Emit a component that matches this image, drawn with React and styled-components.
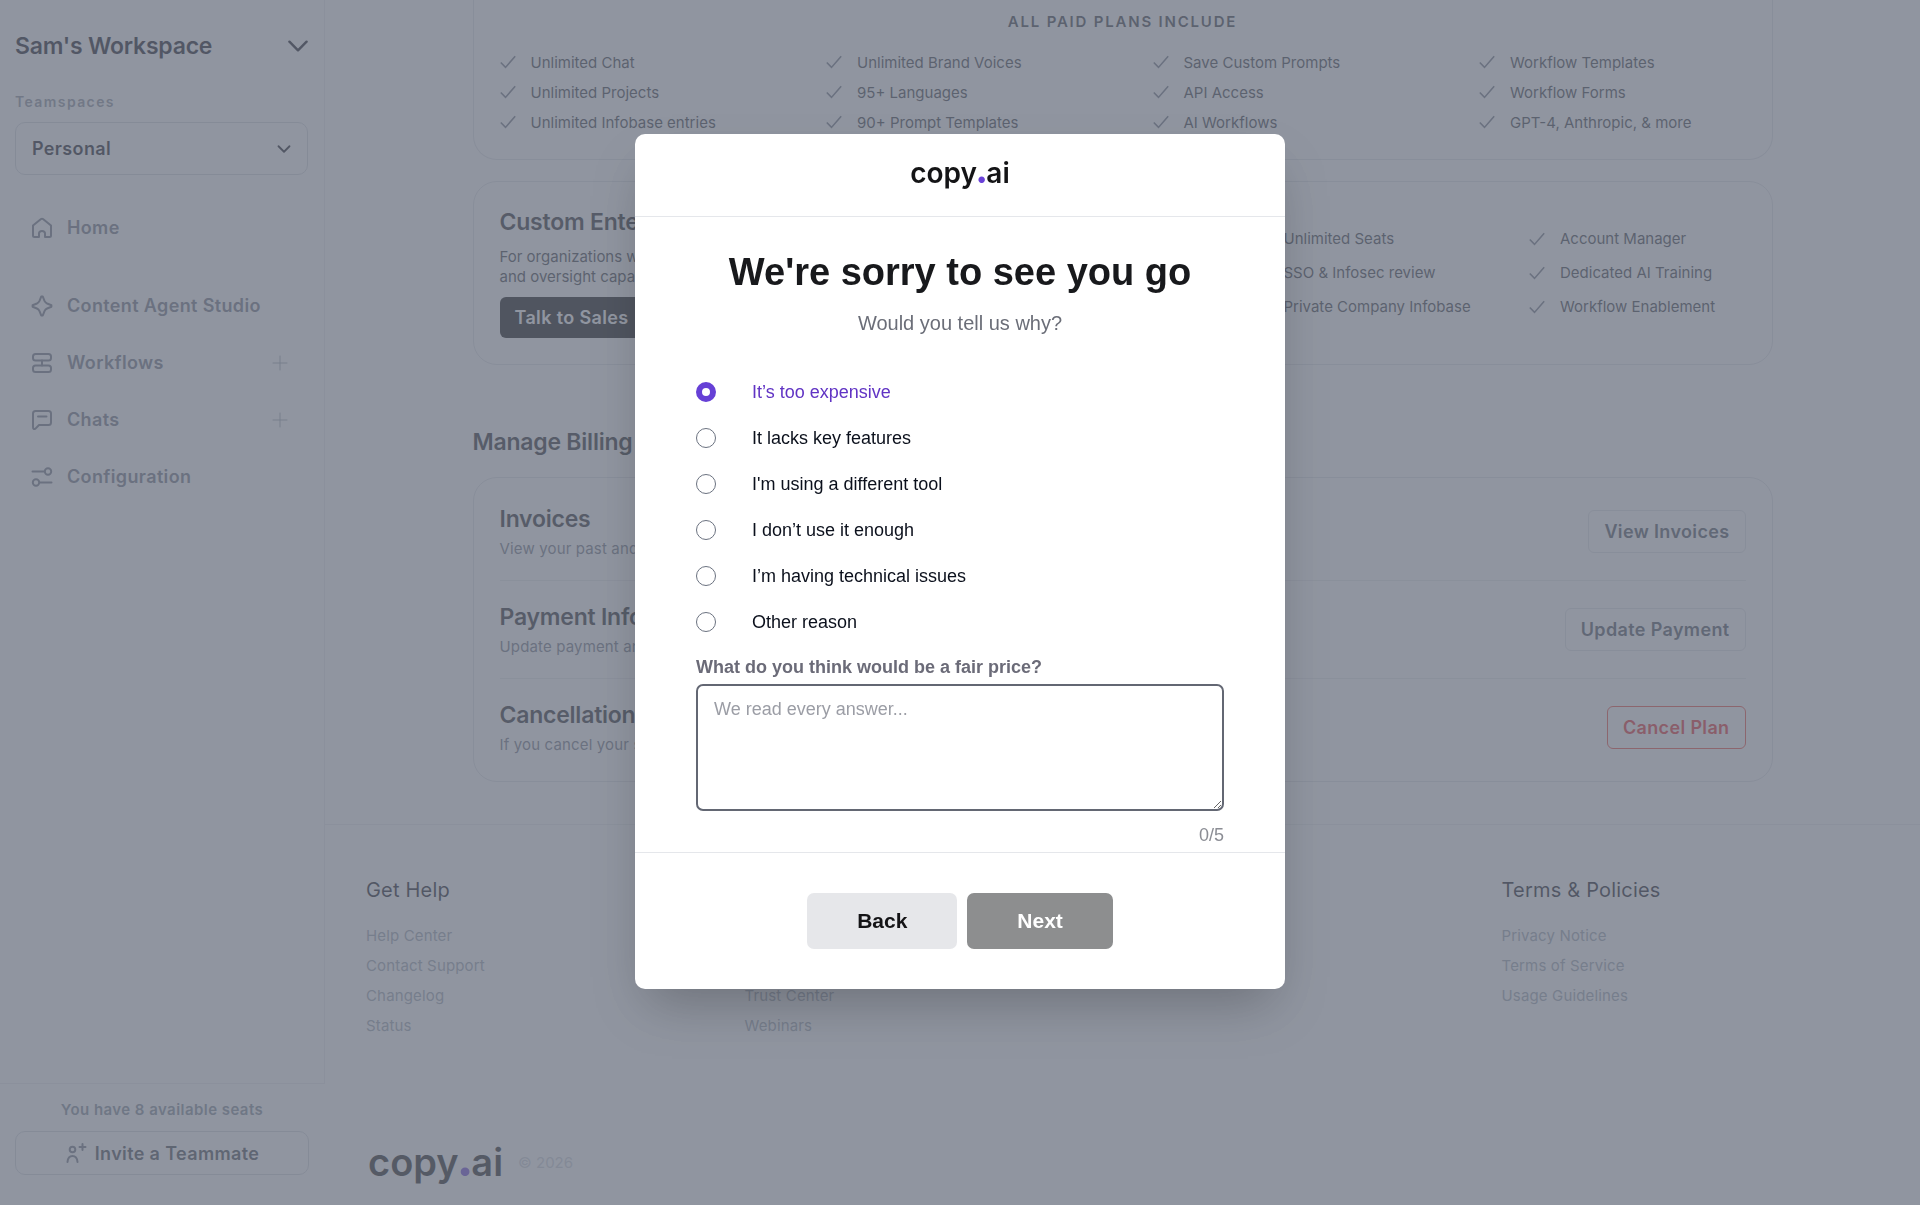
import React, { useState } from "react";
import styled, { createGlobalStyle } from "styled-components";
import { ChevronDown, Plus } from "lucide-react";

const GlobalStyle = createGlobalStyle`
  *, *::before, *::after { box-sizing: border-box; }
  body { margin: 0; background: #fff; font-family: Inter, "Liberation Sans", sans-serif; color: #0b0b14; }
  h1, h2, h3, p, ul { margin: 0; padding: 0; }
  ul { list-style: none; }
  a { color: inherit; text-decoration: none; }
  button, select, textarea { font: inherit; color: inherit; }
`;

const Shell = styled.div`
  display: flex;
  height: 100vh;
  overflow: hidden;
`;

/* Sidebar */

const Sidebar = styled.aside`
  display: flex;
  flex-direction: column;
  flex: none;
  width: 325px;
`;

const SidebarBody = styled.div`
  flex: 1;
  padding: 28px 16px 0 15px;
  border-right: 1px solid #ebebee;
`;

const WorkspaceButton = styled.button`
  display: flex;
  align-items: center;
  justify-content: space-between;
  width: 100%;
  height: 36px;
  padding: 0;
  border: 0;
  background: none;
  font-size: 23px;
  font-weight: 600;
  letter-spacing: -0.01em;
`;

const TeamLabel = styled.label`
  display: block;
  margin: 28px 0 10px;
  font-size: 14px;
  line-height: 20px;
  font-weight: 600;
  letter-spacing: 0.1em;
  color: #868d99;
`;

const SelectWrap = styled.div`
  position: relative;
  svg {
    position: absolute;
    right: 13px;
    top: 16px;
    pointer-events: none;
  }
`;

const TeamSelect = styled.select`
  appearance: none;
  display: block;
  width: 100%;
  height: 53px;
  padding: 0 16px;
  border: 1px solid #d4d7dc;
  border-radius: 10px;
  background: #fff;
  font-size: 18px;
  font-weight: 600;
  letter-spacing: 0.02em;
`;

const Nav = styled.nav`
  display: flex;
  flex-direction: column;
  gap: 16px;
  margin-top: ${(p) => p.$top}px;
`;

const NavRow = styled.div`
  display: flex;
  align-items: center;
  justify-content: space-between;
  height: 41px;
  padding: 0 16px;
`;

const NavLink = styled.a`
  display: flex;
  align-items: center;
  gap: 14px;
  font-size: 18px;
  font-weight: 600;
  letter-spacing: 0.02em;
  color: #6b7280;
`;

const AddButton = styled.button`
  display: flex;
  padding: 0;
  border: 0;
  background: none;
  color: #9ca3af;
`;

const SidebarFoot = styled.div`
  padding: 16px 16px 30px 15px;
  border-top: 1px solid #ebebee;
  text-align: center;
`;

const SeatsText = styled.p`
  font-size: 15px;
  line-height: 20px;
  font-weight: 600;
  letter-spacing: 0.03em;
  color: #7b8794;
`;

const InviteButton = styled.button`
  display: flex;
  align-items: center;
  justify-content: center;
  gap: 8px;
  width: 100%;
  height: 44px;
  margin-top: 11px;
  border: 1px solid #d4d7dc;
  border-radius: 10px;
  background: none;
  font-size: 18px;
  font-weight: 600;
  letter-spacing: 0.02em;
  color: #3f434c;
  svg { color: #6b7280; }
`;

/* Billing page */

const Main = styled.main`
  flex: 1;
  min-width: 0;
  overflow: hidden;
`;

const Content = styled.div`
  max-width: 1300px;
  margin: 0 auto;
`;

const Card = styled.section`
  border: 1px solid #dfe1e5;
  border-radius: 24px;
  padding: 0 26px;
`;

const PlansCard = styled(Card)`
  border-top: 0;
  border-top-left-radius: 0;
  border-top-right-radius: 0;
  padding-top: 12px;
  padding-bottom: 22px;
`;

const Eyebrow = styled.h3`
  text-align: center;
  font-size: 15px;
  line-height: 20px;
  font-weight: 600;
  letter-spacing: 0.12em;
  text-transform: uppercase;
  color: #33363d;
`;

const FeatureList = styled.ul`
  display: grid;
  grid-template-columns: repeat(${(p) => p.$cols}, minmax(0, 1fr));
  grid-template-rows: repeat(3, auto);
  grid-auto-flow: column;
  column-gap: 60px;
  row-gap: ${(p) => p.$gap}px;
`;

const PlansFeatures = styled(FeatureList)`
  margin-top: 15px;
`;

const Feature = styled.li`
  display: flex;
  align-items: center;
  gap: 15px;
  height: 30px;
  font-size: 15px;
  white-space: nowrap;
  color: #33363d;
  svg { color: #6b7280; flex: none; }
`;

const EnterpriseCard = styled(Card)`
  display: flex;
  justify-content: space-between;
  align-items: center;
  margin-top: 21px;
  padding-top: 25px;
  padding-bottom: 26px;
`;

const EnterpriseFeatures = styled(FeatureList)`
  width: 493px;
`;

const CardTitle = styled.h3`
  font-size: 23px;
  line-height: 30px;
  font-weight: 600;
  letter-spacing: -0.01em;
  color: #1c1d24;
`;

const EnterpriseText = styled.p`
  margin: 10px 0;
  font-size: 15px;
  line-height: 20px;
  color: #33363d;
`;

const ActionButton = styled.button`
  height: ${(p) => (p.$variant === "solid" ? 41 : 43)}px;
  padding: 0 15px;
  border: ${(p) => (p.$variant === "solid" ? "0" : p.$variant === "danger" ? "1px solid #f04438" : "1px solid #dfe1e5")};
  border-radius: 6px;
  background: ${(p) => (p.$variant === "solid" ? "#000" : "none")};
  color: ${(p) => (p.$variant === "solid" ? "#fff" : p.$variant === "danger" ? "#e5252a" : "#454b57")};
  font-size: 18px;
  font-weight: 600;
  letter-spacing: 0.02em;
  white-space: nowrap;
`;

const SectionTitle = styled.h2`
  margin: 62px 0 20px;
  font-size: 23px;
  line-height: 30px;
  font-weight: 600;
  letter-spacing: -0.01em;
  color: #1c1d24;
`;

const BillingCard = styled(Card)`
  padding-top: 4px;
  padding-bottom: 5px;
`;

const BillingRow = styled.div`
  display: flex;
  align-items: center;
  justify-content: space-between;
  height: 98px;
  & + & { border-top: 1px solid #e8e9ec; }
`;

const BillingNote = styled.p`
  margin-top: 5px;
  font-size: 15px;
  line-height: 20px;
  letter-spacing: 0.01em;
  color: #6b7280;
`;

/* Footer */

const Footer = styled.footer`
  margin-top: 42px;
  padding: 50px 40px 0 41px;
  border-top: 1px solid #ebecef;
`;

const FooterGrid = styled.div`
  display: grid;
  grid-template-columns: repeat(4, 1fr);
`;

const FooterHeading = styled.h3`
  margin-bottom: 16px;
  font-size: 20px;
  line-height: 30px;
  font-weight: 400;
  letter-spacing: 0.01em;
`;

const FooterLink = styled.a`
  display: block;
  font-size: 15px;
  line-height: 30px;
  letter-spacing: 0.01em;
  color: #99a2ae;
`;

const FooterBrand = styled.div`
  display: flex;
  align-items: center;
  gap: 15px;
  margin-top: 102px;
  padding-left: 2px;
`;

const Copyright = styled.span`
  font-size: 15px;
  color: #ccd0d7;
`;

const Brand = styled.span`
  font-family: Inter, "Liberation Sans", sans-serif;
  font-weight: 600;
  font-size: ${(p) => p.$size}px;
  line-height: 1;
  color: #141416;
`;

const BrandDot = styled.span`
  font-family: Lato, Inter, sans-serif;
  font-weight: 900;
  font-size: 1.4em;
  line-height: 0;
  color: #6a42d8;
`;

/* Dialog */

const Overlay = styled.div`
  position: fixed;
  inset: 0;
  display: flex;
  align-items: flex-start;
  justify-content: center;
  padding-top: 134px;
  background: rgba(107, 114, 128, 0.75);
`;

const Dialog = styled.div`
  width: 650px;
  max-width: 100%;
  border-radius: 10px;
  background: #fff;
  box-shadow: 0 25px 50px -12px rgba(0, 0, 0, 0.25);
  font-family: "Liberation Sans", Arial, sans-serif;
`;

const DialogHeader = styled.div`
  display: flex;
  align-items: center;
  justify-content: center;
  height: 83px;
  padding-bottom: 4px;
  border-bottom: 1px solid #e5e7eb;
`;

const DialogBody = styled.form`
  padding: 30px 61px 5px;
`;

const DialogTitle = styled.h1`
  font-size: 38px;
  line-height: 50px;
  font-weight: 700;
  text-align: center;
  color: #18191c;
`;

const DialogLead = styled.p`
  margin: 12px 0 43px;
  font-size: 20px;
  line-height: 28px;
  text-align: center;
  color: #6b6e78;
`;

const Options = styled.div`
  display: flex;
  flex-direction: column;
  gap: 22px;
  margin-bottom: 21px;
`;

const Option = styled.label`
  display: flex;
  align-items: center;
  gap: 36px;
  font-size: 18px;
  line-height: 24px;
  color: ${(p) => (p.$active ? "#6134c4" : "#0b101c")};
`;

const Radio = styled.input`
  appearance: none;
  flex: none;
  width: 20px;
  height: 20px;
  margin: 0;
  border: 1px solid #6b7280;
  border-radius: 50%;
  background: #fff;
  &:checked { border: 6px solid #6640d6; }
`;

const Question = styled.label`
  display: block;
  font-size: 18px;
  line-height: 24px;
  font-weight: 700;
  color: #6b6b78;
`;

const Answer = styled.textarea`
  display: block;
  width: 100%;
  height: 127px;
  margin: 5px 0 12px;
  padding: 10px 16px;
  border: 2px solid #636773;
  border-radius: 7px;
  outline: 0;
  font-size: 18px;
  line-height: 26px;
  &::placeholder { color: #9b9da5; }
`;

const Counter = styled.p`
  font-size: 18px;
  line-height: 24px;
  text-align: right;
  color: #8b8d94;
`;

const DialogFooter = styled.div`
  display: flex;
  justify-content: center;
  gap: 10px;
  padding: 40px 0;
  border-top: 1px solid #e5e7eb;
`;

const DialogButton = styled.button`
  height: 56px;
  padding: 0 50px;
  border: 0;
  border-radius: 7px;
  font-size: 21px;
  font-weight: 700;
  background: ${(p) => (p.$primary ? "#8d8e8f" : "#e6e7ea")};
  color: ${(p) => (p.$primary ? "#fff" : "#141416")};
`;

/* Icons */

const Icon = ({ children, width = 2 }) => (
  <svg width="22" height="22" viewBox="0 0 22 22" fill="none" stroke="currentColor" strokeWidth={width} strokeLinecap="round" strokeLinejoin="round" aria-hidden="true">
    {children}
  </svg>
);

const HomeIcon = () => (
  <Icon>
    <path d="M2 8.600 10 2q1-.7 2 0l8 6.600V18.500q0 1.500-1.500 1.500H14v-3.500q0-2.500-3-2.500t-3 2.500V20H3.500Q2 20 2 18.500Z" />
  </Icon>
);

const SparkIcon = () => (
  <Icon>
    <path d="M10.200 1.600h1.600l1.700 4.300q.8 1.800 2.600 2.600l4.300 1.700v1.600l-4.300 1.700q-1.800.8-2.600 2.600l-1.700 4.300h-1.600l-1.700-4.300q-.8-1.800-2.600-2.600l-4.300-1.700v-1.600l4.300-1.700q1.800-.8 2.600-2.600Z" />
  </Icon>
);

const WorkflowIcon = () => (
  <Icon>
    <rect x="2" y="2" width="18" height="6.500" rx="2.500" />
    <rect x="2" y="13.500" width="18" height="6.500" rx="2.500" />
    <path d="M11 8.500v5" />
  </Icon>
);

const ChatIcon = () => (
  <Icon>
    <path d="M4.500 2h13Q20 2 20 4.500v9q0 2.500-2.500 2.500H8l-3.500 3.600Q2 21 2 18V4.500Q2 2 4.500 2Z" />
    <path d="M7 7.500h8.500" />
  </Icon>
);

const SlidersIcon = () => (
  <Icon>
    <path d="M1.500 5.500h12M9 16.500h11.500" />
    <circle cx="17" cy="5.500" r="3.200" />
    <circle cx="5" cy="16.500" r="3.200" />
  </Icon>
);

const InviteIcon = () => (
  <Icon>
    <circle cx="7.500" cy="7.500" r="2.800" />
    <path d="M2.500 20q.5-6 5-6t5 6M17.500 2v6M14.500 5h6" />
  </Icon>
);

const Tick = () => (
  <svg width="16" height="14" viewBox="0 0 16 14" fill="none" stroke="currentColor" strokeWidth="1.600" aria-hidden="true">
    <path d="M.8 7.500 5.500 12.400 15.200 1.200" />
  </svg>
);

const Logo = ({ size }) => (
  <Brand $size={size}>copy<BrandDot>.</BrandDot>ai</Brand>
);

/* Data */

const planFeatures = [
  "Unlimited Chat", "Unlimited Projects", "Unlimited Infobase entries",
  "Unlimited Brand Voices", "95+ Languages", "90+ Prompt Templates",
  "Save Custom Prompts", "API Access", "AI Workflows",
  "Workflow Templates", "Workflow Forms", "GPT-4, Anthropic, & more",
];

const enterpriseFeatures = [
  "Unlimited Seats", "SSO & Infosec review", "Private Company Infobase",
  "Account Manager", "Dedicated AI Training", "Workflow Enablement",
];

const navItems = [
  { name: "Content Agent Studio", icon: SparkIcon },
  { name: "Workflows", icon: WorkflowIcon, add: true },
  { name: "Chats", icon: ChatIcon, add: true },
  { name: "Configuration", icon: SlidersIcon },
];

const billingRows = [
  { title: "Invoices", note: "View your past and", action: "View Invoices" },
  { title: "Payment Info", note: "Update payment and", action: "Update Payment" },
  { title: "Cancellation", note: "If you cancel your s", action: "Cancel Plan", variant: "danger" },
];

const footerColumns = [
  { title: "Get Help", links: ["Help Center", "Contact Support", "Changelog", "Status"] },
  { title: "Learn", links: ["Blog", "Tools", "Trust Center", "Webinars"] },
  { title: "Company", links: ["About"] },
  { title: "Terms & Policies", links: ["Privacy Notice", "Terms of Service", "Usage Guidelines"] },
];

const reasons = [
  "It’s too expensive",
  "It lacks key features",
  "I'm using a different tool",
  "I don’t use it enough",
  "I’m having technical issues",
  "Other reason",
];

const FeatureItems = ({ items }) => items.map((f) => <Feature key={f}><Tick />{f}</Feature>);

export default function App() {
  const [reason, setReason] = useState(reasons[0]);
  const [answer, setAnswer] = useState("");

  return (
    <>
      <GlobalStyle />
      <Shell>
        <Sidebar>
          <SidebarBody>
            <WorkspaceButton type="button">
              Sam's Workspace
              <ChevronDown size={20} strokeWidth={1.7} viewBox="5 5 14 14" />
            </WorkspaceButton>
            <TeamLabel htmlFor="team">Teamspaces</TeamLabel>
            <SelectWrap>
              <TeamSelect id="team" defaultValue="Personal">
                <option>Personal</option>
              </TeamSelect>
              <ChevronDown size={22} />
            </SelectWrap>
            <Nav $top={32}>
              <NavRow>
                <NavLink href="#home"><HomeIcon />Home</NavLink>
              </NavRow>
            </Nav>
            <Nav $top={37} aria-label="Tools">
              {navItems.map(({ name, icon: Glyph, add }) => (
                <NavRow key={name}>
                  <NavLink href="#tools"><Glyph />{name}</NavLink>
                  {add && (
                    <AddButton type="button" aria-label={`Add to ${name}`}>
                      <Plus size={24} strokeWidth={1} />
                    </AddButton>
                  )}
                </NavRow>
              ))}
            </Nav>
          </SidebarBody>
          <SidebarFoot>
            <SeatsText>You have 8 available seats</SeatsText>
            <InviteButton type="button"><InviteIcon />Invite a Teammate</InviteButton>
          </SidebarFoot>
        </Sidebar>

        <Main>
          <Content>
            <PlansCard>
              <Eyebrow>All paid plans include</Eyebrow>
              <PlansFeatures $cols={4} $gap={0}>
                <FeatureItems items={planFeatures} />
              </PlansFeatures>
            </PlansCard>
            <EnterpriseCard>
              <div>
                <CardTitle>Custom Enterprise</CardTitle>
                <EnterpriseText>For organizations with security<br />and oversight capability needs</EnterpriseText>
                <ActionButton type="button" $variant="solid">Talk to Sales</ActionButton>
              </div>
              <EnterpriseFeatures $cols={2} $gap={4}>
                <FeatureItems items={enterpriseFeatures} />
              </EnterpriseFeatures>
            </EnterpriseCard>
            <SectionTitle>Manage Billing</SectionTitle>
            <BillingCard>
              {billingRows.map((row) => (
                <BillingRow key={row.title}>
                  <div>
                    <CardTitle>{row.title}</CardTitle>
                    <BillingNote>{row.note}</BillingNote>
                  </div>
                  <ActionButton type="button" $variant={row.variant}>{row.action}</ActionButton>
                </BillingRow>
              ))}
            </BillingCard>
          </Content>
          <Footer>
            <FooterGrid>
              {footerColumns.map((col) => (
                <div key={col.title}>
                  <FooterHeading>{col.title}</FooterHeading>
                  {col.links.map((l) => <FooterLink key={l} href="#footer">{l}</FooterLink>)}
                </div>
              ))}
            </FooterGrid>
            <FooterBrand>
              <Logo size={38} />
              <Copyright>© 2026</Copyright>
            </FooterBrand>
          </Footer>
        </Main>
      </Shell>

      <Overlay>
        <Dialog role="dialog" aria-modal="true" aria-labelledby="dialog-title">
          <DialogHeader><Logo size={28} /></DialogHeader>
          <DialogBody id="survey">
            <DialogTitle id="dialog-title">We're sorry to see you go</DialogTitle>
            <DialogLead>Would you tell us why?</DialogLead>
            <Options role="radiogroup" aria-label="Reason">
              {reasons.map((r) => (
                <Option key={r} $active={r === reason}>
                  <Radio type="radio" name="reason" checked={r === reason} onChange={() => setReason(r)} />
                  {r}
                </Option>
              ))}
            </Options>
            <Question htmlFor="answer">What do you think would be a fair price?</Question>
            <Answer id="answer" placeholder="We read every answer..." value={answer} onChange={(e) => setAnswer(e.target.value)} />
            <Counter>{answer.length}/5</Counter>
          </DialogBody>
          <DialogFooter>
            <DialogButton type="button">Back</DialogButton>
            <DialogButton type="submit" form="survey" $primary>Next</DialogButton>
          </DialogFooter>
        </Dialog>
      </Overlay>
    </>
  );
}
